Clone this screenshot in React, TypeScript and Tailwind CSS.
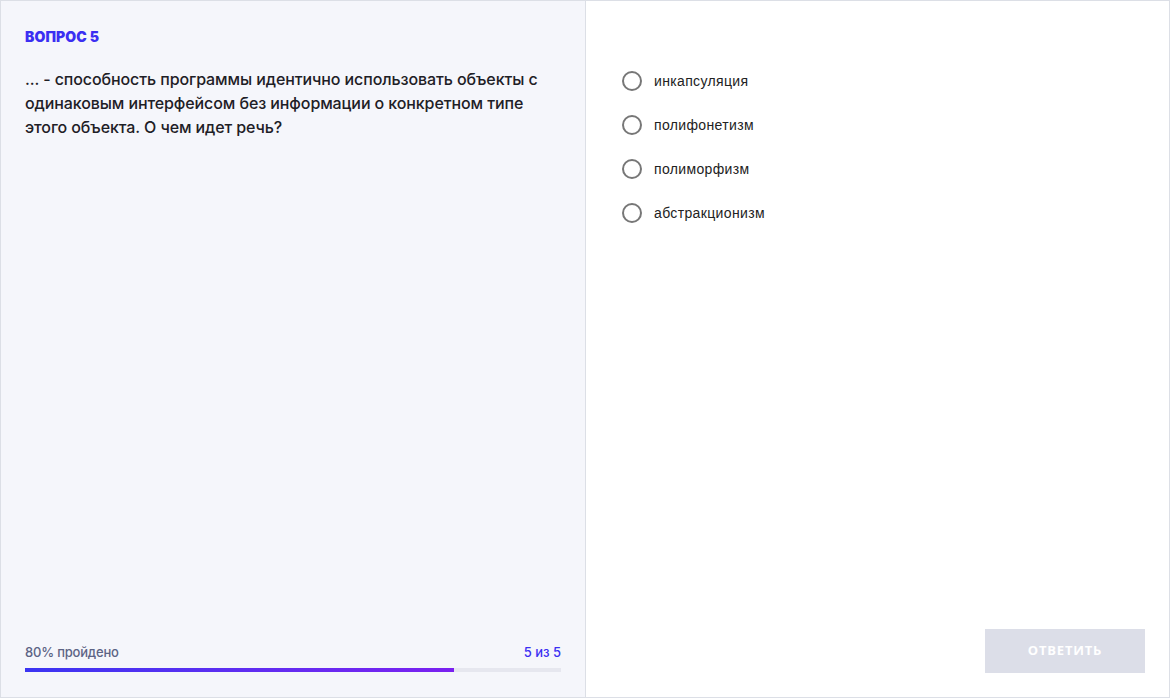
import React from "react";

const options = ["инкапсуляция", "полифонетизм", "полиморфизм", "абстракционизм"];

export default function App() {
  return (
    <div className="w-[1170px] h-[698px] border border-[#dcdfe6] flex bg-white" style={{ fontFamily: "Inter, 'Noto Sans', sans-serif" }}>
      <div className="w-[585px] h-full shrink-0 bg-[#f5f6fb] border-r border-[#dcdfe6] flex flex-col pl-[24px] pr-[24px] pt-[28px] pb-[25px]">
        <div className="text-[14px] leading-[16px] font-black text-[#3b2ff2] tracking-[0.1px]">ВОПРОС 5</div>
        <div className="mt-[22px] text-[16px] leading-[24px] font-medium text-[#1e2026] tracking-[-0.1px]">
          ... - способность программы идентично использовать объекты с одинаковым интерфейсом без информации о конкретном типе этого объекта. О чем идет речь?
        </div>
        <div className="mt-auto">
          <div className="flex justify-between text-[13px] leading-[16px] font-medium">
            <span className="text-[#5d6485] tracking-[-0.2px]">80% пройдено</span>
            <span className="text-[#3b2ff2]">5 из 5</span>
          </div>
          <div className="mt-[8px] h-[4px] bg-[#e6e7ef] w-full">
            <div className="h-full w-[80%] bg-gradient-to-r from-[#3b34f2] to-[#7a20f0]" />
          </div>
        </div>
      </div>
      <div className="flex-1 flex flex-col pl-[36px] pr-[24px] pt-[70px] pb-[24px]">
        <div className="flex flex-col gap-[24px]">
          {options.map((o) => (
            <label key={o} className="flex items-center gap-[12px] h-[20px] cursor-pointer">
              <span className="w-[20px] h-[20px] rounded-full border-2 border-[#777777] bg-white shrink-0" />
              <span className="text-[14px] leading-[18px] text-[#222222] tracking-[0.35px]" style={{ fontFamily: "'Liberation Sans', Arial, sans-serif" }}>{o}</span>
            </label>
          ))}
        </div>
        <div className="mt-auto flex justify-end">
          <button className="w-[160px] h-[44px] bg-[#dcdee8] text-white text-[13px] font-bold tracking-[0.8px] uppercase" style={{ fontFamily: "'Open Sans', sans-serif" }}>
            Ответить
          </button>
        </div>
      </div>
    </div>
  );
}
